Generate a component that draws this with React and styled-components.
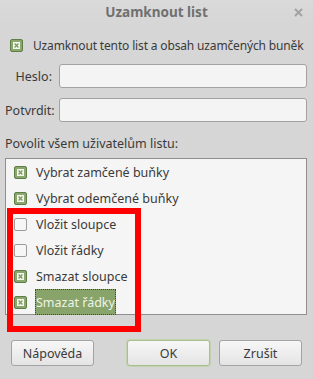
import React from 'react'
import styled, { createGlobalStyle } from 'styled-components'

const GlobalStyle = createGlobalStyle`
  html, body {
    margin: 0;
    padding: 0;
    background: #d6d6d6;
  }
  body {
    font-family: 'Noto Sans', 'Open Sans', sans-serif;
    font-size: 13px;
    color: #3a3a3a;
  }
`

const CheckBox = ({ checked }) => (
  <Box $checked={checked}>
    {checked && (
      <svg width='7' height='7' viewBox='0 0 7 7'>
        <rect x='0' y='0' width='7' height='7' fill='#f4f6ef' />
        <path d='M1.6 1.6 L5.4 5.4 M5.4 1.6 L1.6 5.4' stroke='#7f9d62' strokeWidth='1.4' />
      </svg>
    )}
  </Box>
)

const items = [
  { label: 'Vybrat zamčené buňky', checked: true },
  { label: 'Vybrat odemčené buňky', checked: true },
  { label: 'Vložit sloupce', checked: false },
  { label: 'Vložit řádky', checked: false },
  { label: 'Smazat sloupce', checked: true },
  { label: 'Smazat řádky', checked: true, selected: true }
]

const App = () => {
  return (
    <Dialog>
      <GlobalStyle />
      <TitleBar>
        <Title>Uzamknout list</Title>
        <Close>
          <svg width='9' height='9' viewBox='0 0 9 9'>
            <path d='M1 1 L8 8 M8 1 L1 8' stroke='#a3a3a3' strokeWidth='2' />
          </svg>
        </Close>
      </TitleBar>
      <Body>
        <CheckRow>
          <CheckBox checked />
          <span>Uzamknout tento list a obsah uzamčených buněk</span>
        </CheckRow>
        <Fields>
          <FieldLabel>Heslo:</FieldLabel>
          <Input />
          <FieldLabel>Potvrdit:</FieldLabel>
          <Input />
        </Fields>
        <SectionLabel>Povolit všem uživatelům listu:</SectionLabel>
        <ListBox>
          {items.map(item => (
            <ListItem key={item.label}>
              <CheckBox checked={item.checked} />
              <ItemText $selected={item.selected}>{item.label}</ItemText>
            </ListItem>
          ))}
        </ListBox>
        <Highlight />
        <Buttons>
          <Button>Nápověda</Button>
          <Spacer />
          <Button $default>OK</Button>
          <Button>Zrušit</Button>
        </Buttons>
      </Body>
    </Dialog>
  )
}

const Dialog = styled.div`
  width: 313px;
  height: 379px;
  background: #d6d6d6;
  display: flex;
  flex-direction: column;
  overflow: hidden;
`

const TitleBar = styled.div`
  position: relative;
  height: 25px;
  display: flex;
  align-items: center;
  justify-content: center;
  background: linear-gradient(#dadada, #d6d6d6);
`

const Title = styled.div`
  font-weight: bold;
  font-size: 13.5px;
  color: #707070;
  margin-top: -1px;
`

const Close = styled.div`
  position: absolute;
  right: 10px;
  top: 8px;
  display: flex;
`

const Body = styled.div`
  position: relative;
  display: flex;
  flex-direction: column;
  padding: 0 6px 0 5px;
`

const CheckRow = styled.label`
  display: flex;
  align-items: center;
  gap: 10px;
  padding-left: 5px;
  height: 20px;
  margin-top: 10px;
  font-size: 12px;
  letter-spacing: -0.15px;
  white-space: nowrap;
`

const Box = styled.span`
  box-sizing: border-box;
  width: 13px;
  height: 13px;
  flex: none;
  border-radius: 2px;
  display: flex;
  align-items: center;
  justify-content: center;
  border: 1px solid ${p => (p.$checked ? '#5f7d47' : '#9c9c9c')};
  background: ${p => (p.$checked ? '#8aa76d' : '#f6f6f6')};
`

const Fields = styled.div`
  display: grid;
  grid-template-columns: 47px 1fr;
  column-gap: 7px;
  row-gap: 10px;
  align-items: center;
  margin-top: 9px;
`

const FieldLabel = styled.span`
  text-align: right;
  font-size: 12.5px;
`

const Input = styled.div`
  box-sizing: border-box;
  height: 24px;
  background: #f4f4f4;
  border: 1px solid #a2a2a2;
  border-radius: 3px;
`

const SectionLabel = styled.div`
  margin-top: 12px;
  height: 20px;
  line-height: 20px;
  font-size: 12.5px;
`

const ListBox = styled.div`
  box-sizing: border-box;
  margin-top: 4px;
  height: 157px;
  border: 1px solid #8f8f8f;
  background: #f5f5f5;
  padding: 0 0 0 8px;
`

const ListItem = styled.div`
  display: flex;
  align-items: center;
  gap: 9px;
  height: 26px;
  font-size: 12.5px;
`

const ItemText = styled.span`
  box-sizing: border-box;
  height: 26px;
  display: flex;
  align-items: center;
  padding: 0 1px;
  margin-left: -1px;
  background: ${p => (p.$selected ? '#88a46b' : 'transparent')};
  color: ${p => (p.$selected ? '#eef3e6' : 'inherit')};
  outline: ${p => (p.$selected ? '1px dotted #3d4a30' : 'none')};
  outline-offset: -1px;
`

const Highlight = styled.div`
  position: absolute;
  left: 7px;
  top: 183px;
  width: 122px;
  height: 112px;
  border: 6px solid #ff0000;
  pointer-events: none;
`

const Buttons = styled.div`
  display: flex;
  gap: 9px;
  margin-top: 25px;
  padding: 0 5px 0 6px;
`

const Spacer = styled.div`
  flex: 1;
`

const Button = styled.div`
  box-sizing: border-box;
  width: 83px;
  height: 26px;
  display: flex;
  align-items: center;
  justify-content: center;
  font-size: 12.5px;
  border-radius: 3px;
  background: linear-gradient(#f7f7f7, #e4e4e4);
  border: 1px solid ${p => (p.$default ? '#a9bf90' : '#a3a3a3')};
  box-shadow: ${p => (p.$default ? '0 0 0 1px #c3d3b0' : 'none')};
`

export default App
